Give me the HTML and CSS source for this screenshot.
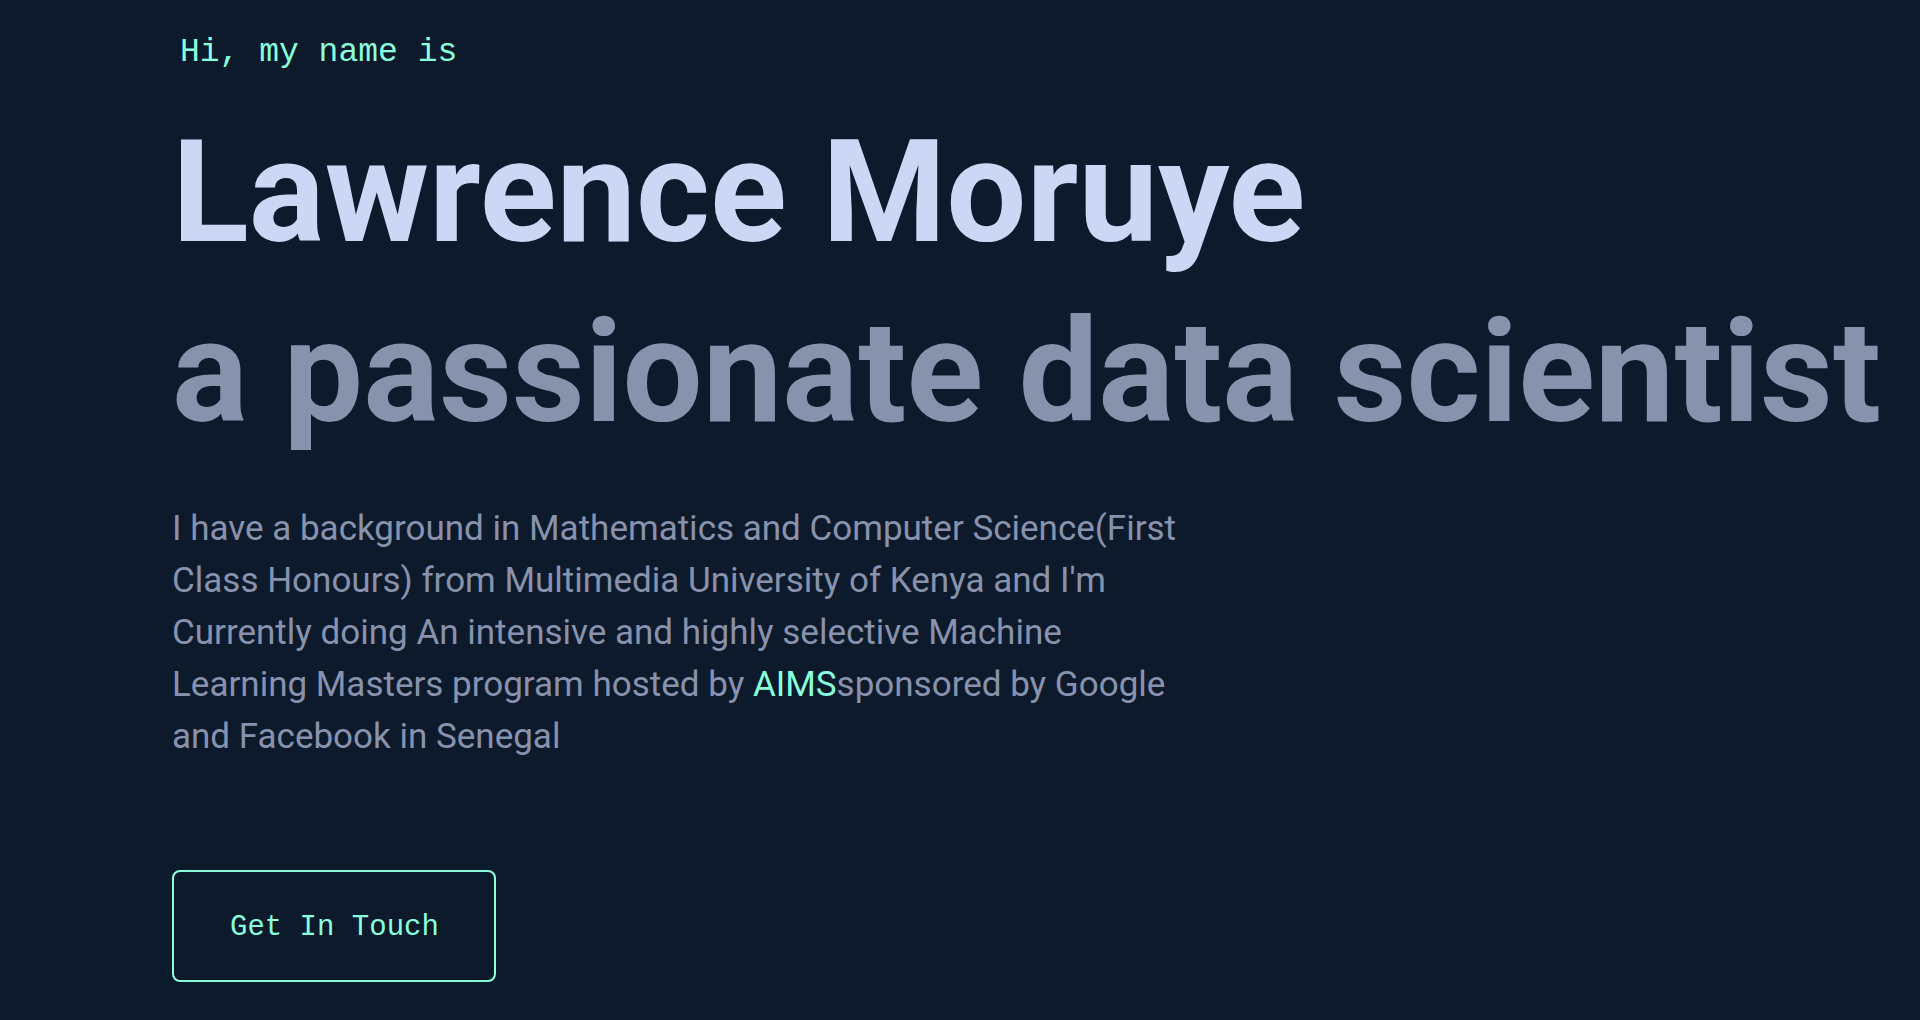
FILE: index.html
```html
<!DOCTYPE html>
<html lang="en">
<head>
<meta charset="utf-8">
<meta name="viewport" content="width=device-width, initial-scale=1">
<title>Lawrence Moruye</title>
<link rel="stylesheet" href="styles.css">
</head>
<body>
<main class="hero">
  <p class="greeting">Hi, my name is</p>
  <h1 class="name">Lawrence Moruye</h1>
  <h2 class="tagline">a passionate data scientist</h2>
  <p class="bio">I have a background in Mathematics and Computer Science(First<br>Class Honours) from Multimedia University of Kenya and I'm<br>Currently doing An intensive and highly selective Machine<br>Learning Masters program hosted by <a class="bio-link" href="#aims">AIMS</a>sponsored by Google<br>and Facebook in Senegal</p>
  <a class="cta" href="#contact">Get In Touch</a>
</main>
</body>
</html>
```
FILE: styles.css
```css
* {
  box-sizing: border-box;
}

body {
  margin: 0;
  min-height: 100vh;
  background: #0d1a2c;
  color: #8892ad;
  font-family: Roboto, "Liberation Sans", sans-serif;
}

.hero {
  padding: 33px 0 38px 172px;
}

.greeting {
  margin: 0 0 0 8px;
  color: #8affdc;
  font: 400 33px/40px "Liberation Mono", monospace;
}

.name,
.tagline {
  margin: 0;
  font-size: 142px;
  font-weight: 700;
  line-height: 180px;
  white-space: nowrap;
}

.name {
  margin-top: 30px;
  color: #cdd6f4;
}

.bio {
  margin: 40px 0 0;
  font-size: 35px;
  line-height: 52px;
  white-space: nowrap;
}

.bio-link {
  color: #8affdc;
  text-decoration: none;
}

.cta {
  display: inline-block;
  margin-top: 107px;
  padding: 34px 55px 30px 56px;
  border: 2px solid #8affdc;
  border-radius: 8px;
  color: #8affdc;
  font: 400 29px/44px "Liberation Mono", monospace;
  text-decoration: none;
}
```
